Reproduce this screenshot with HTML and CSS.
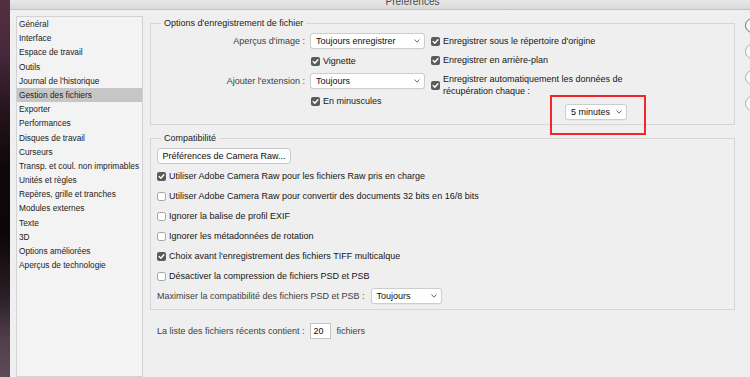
FILE: index.html
```html
<!DOCTYPE html>
<html lang="fr">
<head>
<meta charset="utf-8">
<title>Préférences</title>
<link rel="stylesheet" href="styles.css">
</head>
<body>
<div class="desktop"></div>
<div class="window">
  <header class="titlebar"><span class="title">Préférences</span></header>
  <div class="content">
    <ul class="nav">
      <li>Général</li>
      <li>Interface</li>
      <li>Espace de travail</li>
      <li>Outils</li>
      <li>Journal de l'historique</li>
      <li class="active">Gestion des fichiers</li>
      <li>Exporter</li>
      <li>Performances</li>
      <li>Disques de travail</li>
      <li>Curseurs</li>
      <li>Transp. et coul. non imprimables</li>
      <li>Unités et règles</li>
      <li>Repères, grille et tranches</li>
      <li>Modules externes</li>
      <li>Texte</li>
      <li>3D</li>
      <li>Options améliorées</li>
      <li>Aperçus de technologie</li>
    </ul>

    <main class="panel">
      <fieldset class="group save">
        <legend>Options d'enregistrement de fichier</legend>
        <div class="save-body">
          <div class="save-left">
            <span class="label">Aperçus d'image :</span>
            <div class="select wide"><span>Toujours enregistrer</span><svg class="chev" width="6" height="4" viewBox="0 0 6 4"><polyline points="0.5,0.5 3,3.2 5.5,0.5"/></svg></div>
            <span></span>
            <label class="check inset"><svg class="cb" width="9" height="9" viewBox="0 0 9 9"><rect class="on" x="0" y="0" width="9" height="9" rx="2"/><path d="M2.2 4.6 L3.8 6.2 L6.9 2.7"/></svg><span>Vignette</span></label>
            <span class="label">Ajouter l'extension :</span>
            <div class="select wide"><span>Toujours</span><svg class="chev" width="6" height="4" viewBox="0 0 6 4"><polyline points="0.5,0.5 3,3.2 5.5,0.5"/></svg></div>
            <span></span>
            <label class="check inset"><svg class="cb" width="9" height="9" viewBox="0 0 9 9"><rect class="on" x="0" y="0" width="9" height="9" rx="2"/><path d="M2.2 4.6 L3.8 6.2 L6.9 2.7"/></svg><span>En minuscules</span></label>
          </div>
          <div class="save-right">
            <label class="check r1"><svg class="cb" width="9" height="9" viewBox="0 0 9 9"><rect class="on" x="0" y="0" width="9" height="9" rx="2"/><path d="M2.2 4.6 L3.8 6.2 L6.9 2.7"/></svg><span>Enregistrer sous le répertoire d'origine</span></label>
            <label class="check r2"><svg class="cb" width="9" height="9" viewBox="0 0 9 9"><rect class="on" x="0" y="0" width="9" height="9" rx="2"/><path d="M2.2 4.6 L3.8 6.2 L6.9 2.7"/></svg><span>Enregistrer en arrière-plan</span></label>
            <label class="check r3"><svg class="cb" width="9" height="9" viewBox="0 0 9 9"><rect class="on" x="0" y="0" width="9" height="9" rx="2"/><path d="M2.2 4.6 L3.8 6.2 L6.9 2.7"/></svg><span>Enregistrer automatiquement les données de<br>récupération chaque :</span></label>
            <div class="select minutes"><span>5 minutes</span><svg class="chev" width="6" height="4" viewBox="0 0 6 4"><polyline points="0.5,0.5 3,3.2 5.5,0.5"/></svg></div>
          </div>
        </div>
      </fieldset>

      <fieldset class="group compat">
        <legend>Compatibilité</legend>
        <button class="push" type="button">Préférences de Camera Raw...</button>
        <label class="check row"><svg class="cb" width="9" height="9" viewBox="0 0 9 9"><rect class="on" x="0" y="0" width="9" height="9" rx="2"/><path d="M2.2 4.6 L3.8 6.2 L6.9 2.7"/></svg><span>Utiliser Adobe Camera Raw pour les fichiers Raw pris en charge</span></label>
        <label class="check row"><svg class="cb" width="9" height="9" viewBox="0 0 9 9"><rect class="off" x="0.5" y="0.5" width="8" height="8" rx="2"/></svg><span>Utiliser Adobe Camera Raw pour convertir des documents 32 bits en 16/8 bits</span></label>
        <label class="check row"><svg class="cb" width="9" height="9" viewBox="0 0 9 9"><rect class="off" x="0.5" y="0.5" width="8" height="8" rx="2"/></svg><span>Ignorer la balise de profil EXIF</span></label>
        <label class="check row"><svg class="cb" width="9" height="9" viewBox="0 0 9 9"><rect class="off" x="0.5" y="0.5" width="8" height="8" rx="2"/></svg><span>Ignorer les métadonnées de rotation</span></label>
        <label class="check row"><svg class="cb" width="9" height="9" viewBox="0 0 9 9"><rect class="on" x="0" y="0" width="9" height="9" rx="2"/><path d="M2.2 4.6 L3.8 6.2 L6.9 2.7"/></svg><span>Choix avant l'enregistrement des fichiers TIFF multicalque</span></label>
        <label class="check row"><svg class="cb" width="9" height="9" viewBox="0 0 9 9"><rect class="off" x="0.5" y="0.5" width="8" height="8" rx="2"/></svg><span>Désactiver la compression de fichiers PSD et PSB</span></label>
        <div class="row maxi">
          <span class="label">Maximiser la compatibilité des fichiers PSD et PSB :</span>
          <div class="select compat-sel"><span>Toujours</span><svg class="chev" width="6" height="4" viewBox="0 0 6 4"><polyline points="0.5,0.5 3,3.2 5.5,0.5"/></svg></div>
        </div>
      </fieldset>

      <div class="recent">
        <span class="label">La liste des fichiers récents contient :</span>
        <span class="field">20</span>
        <span class="label">fichiers</span>
      </div>
    </main>

    <div class="actions">
      <button class="side default" type="button">OK</button>
      <button class="side" type="button">Annuler</button>
      <button class="side" type="button">Précédent</button>
      <button class="side" type="button">Suivant</button>
    </div>
  </div>
</div>
<div class="highlight"></div>
</body>
</html>
```

FILE: styles.css
```css
* { box-sizing: border-box; }
html, body { margin: 0; padding: 0; }
body {
  width: 750px;
  height: 377px;
  overflow: hidden;
  display: flex;
  font-family: "Liberation Sans", Arial, sans-serif;
  background: #120a0e;
}
.desktop {
  flex: 0 0 10px;
  background: linear-gradient(180deg, #54303f 0%, #46283a 14%, #24131b 30%, #0e080a 45%, #0c0608 62%, #2a1d25 78%, #4f3f4a 90%, #5d4c58 100%);
}
.window {
  flex: 0 0 805px;
  background: #efefef;
  display: flex;
  flex-direction: column;
}
.titlebar {
  height: 10px;
  flex: 0 0 10px;
  background: linear-gradient(#e8e8e8, #d9d9d9);
  border-bottom: 1px solid #c4c4c4;
  text-align: center;
  overflow: hidden;
}
.title {
  display: block;
  font-size: 10px;
  line-height: 10px;
  margin-top: -3px;
  color: #4b4b4b;
}
.content {
  display: flex;
  padding-top: 6px;
  height: 400px;
}
.nav {
  list-style: none;
  margin: 0 0 0 6px;
  padding: 0;
  width: 127px;
  flex: 0 0 127px;
  border: 1px solid #d2d2d2;
  background: #f3f3f3;
  font-size: 8.3px;
  line-height: 14.2px;
  color: #222222;
}
.nav li {
  height: 14.2px;
  padding-left: 2px;
  white-space: nowrap;
}
.nav li.active { background: #c6c6c6; }

.panel {
  flex: 0 0 602px;
  padding: 1px 10px 0 7px;
  font-size: 9px;
  color: #161616;
}
.group {
  margin: 0;
  padding: 0;
  min-width: 0;
  border: 1px solid #d6d6d6;
}
.group legend {
  margin-left: 10px;
  padding: 0 3px;
  font-size: 9px;
  line-height: 12px;
  color: #222222;
}
.label { color: #404040; white-space: nowrap; }

.save-body {
  display: flex;
  padding: 4px 0 4px 0;
}
.save-left {
  display: grid;
  grid-template-columns: 154px 115px;
  column-gap: 5px;
  row-gap: 4px;
  grid-auto-rows: 16px;
  align-items: center;
  align-self: flex-start;
}
.save-left .label { text-align: right; }
.save-right {
  margin-left: 6px;
  display: flex;
  flex-direction: column;
}
.check {
  display: flex;
  align-items: center;
  gap: 3px;
  white-space: nowrap;
  color: #161616;
}
.check.inset { margin-left: 1px; }
.cb { flex: 0 0 9px; display: block; }
.cb .on { fill: #5b5b5b; }
.cb .off { fill: #ffffff; stroke: #a3a3a3; stroke-width: 1; }
.cb path { fill: none; stroke: #ffffff; stroke-width: 1.4; stroke-linecap: round; stroke-linejoin: round; }
.r1 { height: 16px; }
.r2 { height: 16px; margin-top: 3px; }
.r3 { height: 24px; margin-top: 5px; line-height: 12px; }

.select {
  display: flex;
  align-items: center;
  justify-content: space-between;
  height: 16px;
  padding: 0 4px 0 5px;
  background: #ffffff;
  border: 1px solid #cdcdcd;
  border-radius: 3px;
  box-shadow: 0 0.5px 0 rgba(0,0,0,0.06);
  color: #0e0e0e;
  white-space: nowrap;
}
.chev { display: block; flex: 0 0 6px; }
.chev polyline { fill: none; stroke: #6a6a6a; stroke-width: 1; }
.select.wide { width: 115px; }
.select.minutes { width: 62px; margin-top: 7px; margin-left: 134px; }

.compat { margin-top: 7px; padding: 4px 0 3px 6px; }
.compat legend { margin-left: 4px; }
.push {
  display: block;
  width: 134px;
  height: 16px;
  margin: 0 0 2px 0;
  padding: 0;
  background: #fbfbfb;
  border: 1px solid #c8c8c8;
  border-radius: 3px;
  font-family: inherit;
  font-size: 9px;
  color: #111111;
  text-align: center;
}
.row { height: 20px; display: flex; align-items: center; }
.maxi { gap: 6px; }
.select.compat-sel { width: 71px; }

.recent {
  margin-top: 13px;
  padding-left: 7px;
  height: 16px;
  display: flex;
  align-items: center;
}
.field {
  width: 21px;
  height: 16px;
  margin: 0 6px 0 5px;
  padding-left: 3px;
  line-height: 14px;
  background: #ffffff;
  border: 1px solid #c2c2c2;
  color: #0e0e0e;
}

.actions {
  display: flex;
  flex-direction: column;
  gap: 11px;
  padding-top: 2px;
}
.side {
  width: 70px;
  height: 15px;
  padding: 0;
  border: 1px solid #ababab;
  border-radius: 8px;
  background: #fafafa;
  font-family: inherit;
  font-size: 9px;
  color: #1a1a1a;
}
.side.default { border-color: #6c6c6c; }

.highlight {
  position: absolute;
  left: 550px;
  top: 95px;
  width: 96px;
  height: 40px;
  border: 2px solid #f0262b;
}
```
